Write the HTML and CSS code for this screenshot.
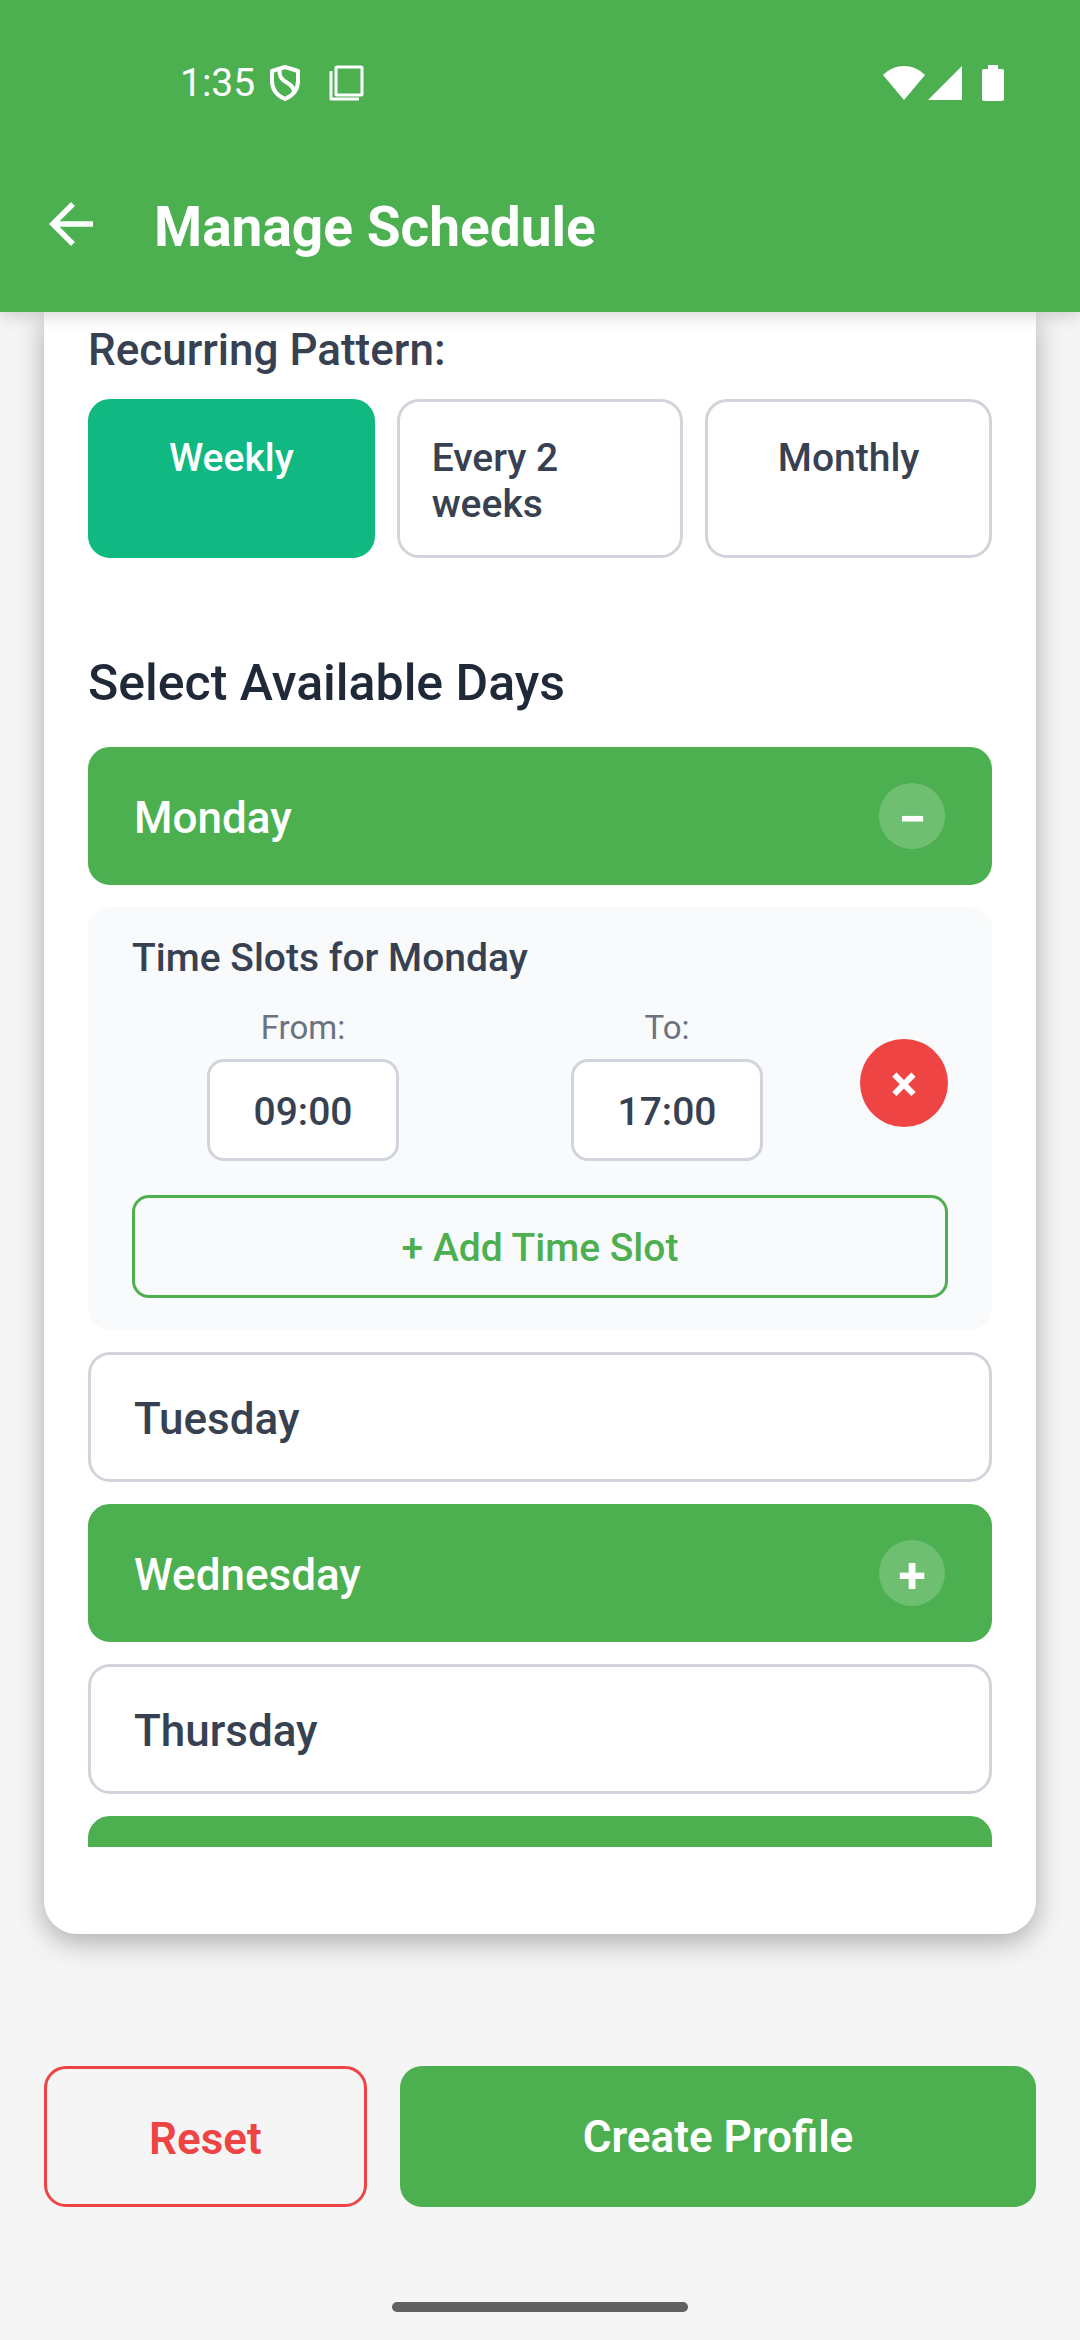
FILE: index.html
```html
<!DOCTYPE html>
<html lang="en">
<head>
<meta charset="utf-8">
<meta name="viewport" content="width=device-width, initial-scale=1">
<title>Manage Schedule</title>
<link rel="stylesheet" href="styles.css">
</head>
<body>
<div class="app">
  <header class="header">
    <div class="status">
      <span class="status-time">1:35</span>
      <svg class="status-shield" width="31" height="38" viewBox="0 0 31 38" fill="none" stroke="currentColor" stroke-width="4" stroke-linejoin="round" aria-hidden="true"><path d="M15 3 28 7V17C28 26 22 32 15 35 8 32 2 26 2 17V7Z"/><path d="M10 5C7 20 24 17 24 28" stroke-width="4"/></svg>
      <svg width="35" height="36" viewBox="0 0 35 36" fill="none" stroke="currentColor" stroke-width="3" aria-hidden="true"><rect x="7" y="2" width="26" height="28" rx="1"/><path d="M2 6V34H30" stroke-linejoin="round"/></svg>
      <span class="status-space"></span>
      <svg width="42" height="36" viewBox="0 0 42 36" fill="currentColor" aria-hidden="true"><path d="M21 35 0 10C12-2 30-2 42 10Z"/></svg>
      <svg class="status-signal" width="34" height="34" viewBox="0 0 34 34" fill="currentColor" aria-hidden="true"><path d="M34 0V34H0Z"/></svg>
      <svg width="22" height="36" viewBox="0 0 22 36" fill="currentColor" aria-hidden="true"><path d="M6 0h10v4h4q2 0 2 2v28q0 2-2 2H2q-2 0-2-2V6q0-2 2-2h4Z"/></svg>
    </div>
    <div class="appbar">
      <button class="back" type="button" aria-label="Back"><svg width="66" height="66" viewBox="0 0 24 24" fill="currentColor" aria-hidden="true"><path d="M20 11H7.83l5.59-5.59L12 4l-8 8 8 8 1.41-1.41L7.83 13H20z"/></svg></button>
      <h1 class="title">Manage Schedule</h1>
    </div>
  </header>

  <main class="card">
    <div class="scroller">
      <h2 class="label">Recurring Pattern:</h2>
      <div class="patterns">
        <button class="pattern pattern-on" type="button">Weekly</button>
        <button class="pattern" type="button">Every 2 weeks</button>
        <button class="pattern" type="button">Monthly</button>
      </div>

      <h2 class="section">Select Available Days</h2>
      <div class="days">
        <button class="day day-on" type="button"><span class="day-name">Monday</span><span class="toggle">−</span></button>
        <section class="slots">
          <h3 class="slots-title">Time Slots for Monday</h3>
          <div class="slot">
            <div class="field">
              <label class="field-label" for="from">From:</label>
              <input class="time" id="from" type="text" value="09:00">
            </div>
            <div class="field">
              <label class="field-label" for="to">To:</label>
              <input class="time" id="to" type="text" value="17:00">
            </div>
            <button class="remove" type="button">×</button>
          </div>
          <button class="add" type="button">+ Add Time Slot</button>
        </section>
        <button class="day" type="button"><span class="day-name">Tuesday</span></button>
        <button class="day day-on" type="button"><span class="day-name">Wednesday</span><span class="toggle">+</span></button>
        <button class="day" type="button"><span class="day-name">Thursday</span></button>
        <button class="day day-on" type="button" aria-label="Friday"><span class="toggle"></span></button>
      </div>
    </div>
  </main>

  <footer class="footer">
    <div class="actions">
      <button class="action reset" type="button">Reset</button>
      <button class="action create" type="button">Create Profile</button>
    </div>
    <div class="home"></div>
  </footer>
</div>
</body>
</html>
```
FILE: styles.css
```css
:root {
  --green: #4caf50;
  --red: #ef4444;
  --line: #d1d5db;
  --ink: #374151;
}

* { box-sizing: border-box; }

body {
  margin: 0;
  background: #f5f5f5;
  color: var(--ink);
  font-family: Roboto, "Noto Sans", sans-serif;
}

h1, h2, h3 { margin: 0; font-weight: 500; }

button, input { font: inherit; color: inherit; margin: 0; }

button { border: 0; padding: 0; background: none; cursor: pointer; }

svg { display: block; flex: none; }

.app {
  display: flex;
  flex-direction: column;
  height: 100vh;
  overflow: hidden;
}

/* Header */
.header {
  position: relative;
  z-index: 1;
  background: var(--green);
  color: #fff;
  box-shadow: 0 4px 16px rgba(0, 0, 0, 0.16);
}

.status {
  display: flex;
  align-items: center;
  height: 136px;
  padding: 30px 76px 0 180px;
}

.status-time { font-size: 39px; line-height: 46px; }
.status-shield { margin: 0 28px 0 15px; }
.status-space { flex: 1; }
.status-signal { margin: 0 20px 0 3px; }

.appbar {
  display: flex;
  align-items: center;
  gap: 50px;
  height: 176px;
  padding: 0 38px;
}

.title {
  padding-top: 6px;
  font-size: 55px;
  font-weight: 700;
  line-height: 64px;
}

/* Schedule card */
.card {
  display: flex;
  flex: 1;
  flex-direction: column;
  min-height: 0;
  margin: 0 44px;
  padding: 0 44px 87px;
  background: #fff;
  border-radius: 0 0 33px 33px;
  box-shadow: 0 8px 28px rgba(0, 0, 0, 0.3);
}

.scroller {
  flex: 1;
  min-height: 0;
  padding-top: 12px;
  overflow-y: auto;
  scrollbar-width: none;
}

.label { font-size: 44px; line-height: 52px; }

.patterns {
  display: grid;
  grid-template-columns: repeat(3, minmax(0, 1fr));
  gap: 22px;
  margin: 23px 0 96px;
}

.pattern {
  display: flex;
  justify-content: center;
  align-items: flex-start;
  padding: 33px 32px 28px;
  border: 3px solid var(--line);
  border-radius: 22px;
  font-size: 39px;
  font-weight: 500;
  line-height: 46px;
  text-align: left;
}

.pattern-on {
  background: #10b981;
  border-color: #10b981;
  color: #fff;
}

.section {
  margin-bottom: 35px;
  color: #1f2937;
  font-size: 50px;
  line-height: 58px;
}

.days { display: flex; flex-direction: column; gap: 22px; }

.day {
  display: flex;
  flex: none;
  justify-content: space-between;
  align-items: center;
  padding: 33px 44px 33px 43px;
  border: 3px solid var(--line);
  border-radius: 22px;
  font-size: 44px;
  font-weight: 500;
}

.day-on {
  background: var(--green);
  border-color: var(--green);
  color: #fff;
}

.day-name { padding-top: 4px; line-height: 54px; }

.toggle {
  width: 66px;
  height: 66px;
  padding-top: 3px;
  border-radius: 50%;
  background: rgba(255, 255, 255, 0.2);
  font-size: 50px;
  font-weight: 700;
  line-height: 66px;
  text-align: center;
}

/* Time slots */
.slots {
  padding: 28px 44px 32px;
  border-radius: 22px;
  background: #f9fafb;
}

.slots-title { font-size: 39px; line-height: 46px; }

.slot {
  display: flex;
  align-items: center;
  gap: 22px;
  margin: 24px 0 34px;
}

.field {
  display: flex;
  flex: 1;
  flex-direction: column;
  align-items: center;
  gap: 9px;
  min-width: 0;
}

.field-label {
  padding-top: 1px;
  color: #6b7280;
  font-size: 33px;
  line-height: 44px;
}

.time {
  width: 192px;
  padding: 27px 0 23px;
  border: 3px solid var(--line);
  border-radius: 17px;
  background: #fff;
  font-size: 39px;
  font-weight: 500;
  line-height: 46px;
  height: 102px;
  text-align: center;
}

.remove {
  flex: none;
  width: 88px;
  height: 88px;
  padding-top: 3px;
  border-radius: 50%;
  background: var(--red);
  color: #fff;
  font-size: 50px;
  font-weight: 700;
  line-height: 85px;
}

.add {
  display: block;
  width: 100%;
  padding: 27px 0 24px;
  border: 3px solid var(--green);
  border-radius: 17px;
  color: var(--green);
  font-size: 39px;
  font-weight: 500;
  line-height: 46px;
}

/* Footer */
.footer { padding: 132px 44px 28px; }

.actions {
  display: grid;
  grid-template-columns: 33fr 65fr;
  gap: 33px;
}

.action {
  border-radius: 22px;
  font-size: 44px;
  font-weight: 600;
  line-height: 52px;
}

.reset {
  padding: 44px 0 39px;
  border: 3px solid var(--red);
  color: var(--red);
}

.create { background: var(--green); color: #fff; }

.home {
  width: 296px;
  height: 10px;
  margin: 95px auto 0;
  border-radius: 5px;
  background: #616161;
}
```
